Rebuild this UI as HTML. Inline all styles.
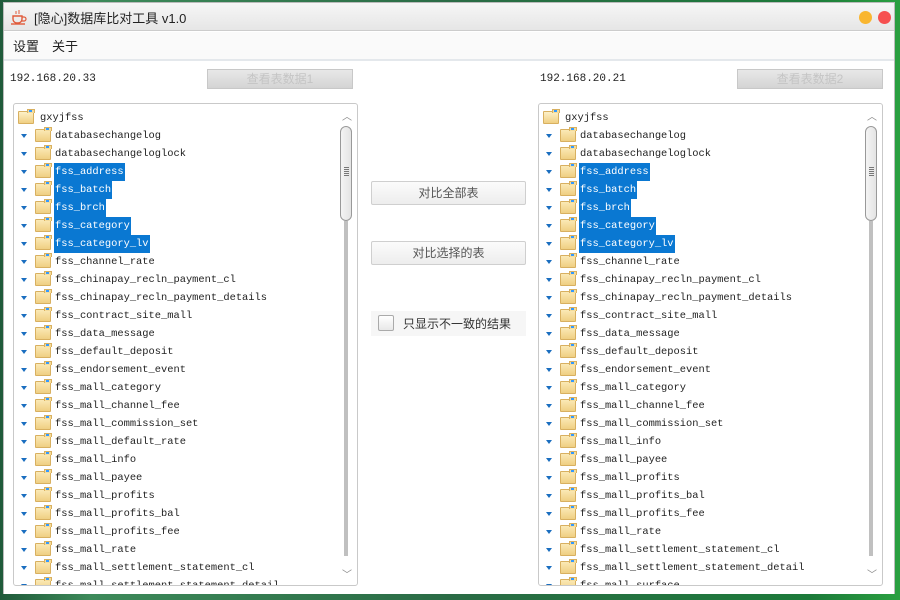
<!DOCTYPE html>
<html><head><meta charset="utf-8"><style>
*{margin:0;padding:0;box-sizing:border-box}
body{width:900px;height:600px;overflow:hidden;position:relative;background:linear-gradient(90deg,#1f5a3a 0%,#3d8a5a 10%,#2a6b45 50%,#1c7a3a 90%,#2aa040 100%);font-family:"Liberation Sans","Noto Sans CJK SC",sans-serif}
.win{position:absolute;left:3px;top:2px;width:892px;height:592px;background:#fff;border:1px solid #bbb}
.title{position:absolute;left:0;top:0;width:100%;height:28px;background:linear-gradient(#f6f6f6,#e6e6e6);border-bottom:1px solid #ccc}
.title span{position:absolute;left:30px;top:5px;font-size:13px;color:#222}
.dot{position:absolute;top:8px;width:13px;height:13px;border-radius:50%}
.menu{position:absolute;left:0;top:29px;width:100%;height:29px;background:#fafafa;border-bottom:2px solid #e4e8ec;font-size:13px;color:#222}
.menu span{position:absolute;top:4px}
.content{position:absolute;left:0;top:59px;width:100%;height:532px;background:#fff}
.ip{position:absolute;font-family:"Liberation Mono",monospace;font-size:11px;color:#222}
.gbtn{position:absolute;width:146px;height:20px;border:1px solid #c8c8c8;background:linear-gradient(#e8e8e8,#d4d4d4);color:#c4c4c4;font-size:12px;text-align:center;line-height:18px}
.box{position:absolute;top:103px;width:345px;height:483px;border:1px solid #c9c9c9;border-radius:3px;background:#fff;overflow:hidden}
.row{position:absolute;height:18px;font-family:"Liberation Mono",monospace;font-size:10.4px;color:#222;white-space:nowrap}
.row .arr{position:absolute;left:7px;top:7px;width:0;height:0;border-left:3.5px solid transparent;border-right:3.5px solid transparent;border-top:4px solid #1a6ec0}
.row .fd{position:absolute;left:21px;top:2px;width:16px;height:13px;background:linear-gradient(#fbe9b6,#efcf83);border:1px solid #d8b060;border-radius:1px}
.row .fd:before{content:"";position:absolute;left:8px;top:-3px;width:6px;height:3px;background:#f5dc9a;border:1px solid #d8b060;border-bottom:none}
.row .fd:after{content:"";position:absolute;right:1px;top:-2px;width:3px;height:2px;background:#39f}
.row .t{position:absolute;left:40px;top:0;height:18px;line-height:18px;padding:0 1px}
.sel .t{background:#0a78d2;color:#fff}
.sb{position:absolute;top:0;width:16px;height:100%;background:#fff}
.thumb{position:absolute;left:2px;top:22px;width:12px;height:95px;border:1px solid #999;border-radius:6px;background:linear-gradient(90deg,#f4f4f4,#e4e4e4)}
.trk{position:absolute;left:6px;top:117px;width:4px;height:335px;background:#c0c0c0}
.chev{position:absolute;left:4px;font-size:10px;color:#888}
.btn{position:absolute;left:371px;width:155px;height:24px;border:1px solid #cfcfcf;border-radius:2px;background:linear-gradient(#fbfbfb,#ededed);font-size:12px;color:#555;text-align:center;line-height:22px}
</style></head><body>
<div class="win">
<div class="title">
<svg style="position:absolute;left:6px;top:6px" width="18" height="16" viewBox="0 0 18 16"><path d="M3 7h9v3a4 4 0 0 1-4 4H7a4 4 0 0 1-4-4z" fill="none" stroke="#e05a3a" stroke-width="1.4"/><path d="M12 8h2a2 2 0 0 1 0 4h-2" fill="none" stroke="#e05a3a" stroke-width="1.2"/><path d="M1 15h14" stroke="#e05a3a" stroke-width="1.4"/><path d="M6 2v3M9 1v4" stroke="#e05a3a" stroke-width="1"/></svg>
<span>[隐心]数据库比对工具 v1.0</span>
<div class="dot" style="left:855px;background:#f9b630"></div>
<div class="dot" style="left:874px;background:#f65050"></div>
</div>
<div class="menu"><span style="left:9px">设置</span><span style="left:48px">关于</span></div>
<div class="content"></div>
</div>
<div class="ip" style="left:10px;top:73px">192.168.20.33</div>
<div class="gbtn" style="left:207px;top:69px">查看表数据1</div>
<div class="ip" style="left:540px;top:73px">192.168.20.21</div>
<div class="gbtn" style="left:737px;top:69px">查看表数据2</div>
<div class="btn" style="left:371px;top:181px">对比全部表</div>
<div class="btn" style="left:371px;top:241px">对比选择的表</div>
<div style="position:absolute;left:371px;top:311px;width:155px;height:25px;background:#f6f6f6"></div>
<div style="position:absolute;left:378px;top:315px;width:16px;height:16px;border:1px solid #aaa;border-radius:2px;background:linear-gradient(#fff,#e8e8e8)"></div>
<div style="position:absolute;left:403px;top:315px;font-size:12px;color:#333">只显示不一致的结果</div>

<div class="box" id="L" style="left:13px"></div>
<div class="box" id="R" style="left:538px"></div>
<script>
function build(id,items){
 var b=document.getElementById(id),h='';
 h+='<div class="row" style="left:4px;top:5px"><div class="fd" style="left:0;background:linear-gradient(#fdf0c8,#f0cf83)"></div><div class="t" style="left:21px">gxyjfss</div></div>';
 items.forEach(function(it,i){
  var s=[2,3,4,5,6].indexOf(i)>=0;
  h+='<div class="row'+(s?' sel':'')+'" style="left:0;top:'+(23+i*18)+'px"><div class="arr"></div><div class="fd"></div><div class="t">'+it+'</div></div>';
 });
 h+='<div class="sb" style="left:324px"><div class="chev" style="top:4px">︿</div><div class="thumb"><div style="position:absolute;left:3px;top:40px;width:5px;height:10px;background:repeating-linear-gradient(#777 0 1px,transparent 1px 2px)"></div></div><div class="trk"></div><div class="chev" style="top:462px">﹀</div></div>';
 b.innerHTML=h;
}
var base=['databasechangelog','databasechangeloglock','fss_address','fss_batch','fss_brch','fss_category','fss_category_lv','fss_channel_rate','fss_chinapay_recln_payment_cl','fss_chinapay_recln_payment_details','fss_contract_site_mall','fss_data_message','fss_default_deposit','fss_endorsement_event','fss_mall_category','fss_mall_channel_fee','fss_mall_commission_set'];
build('L',base.concat(['fss_mall_default_rate','fss_mall_info','fss_mall_payee','fss_mall_profits','fss_mall_profits_bal','fss_mall_profits_fee','fss_mall_rate','fss_mall_settlement_statement_cl','fss_mall_settlement_statement_detail']));
build('R',base.concat(['fss_mall_info','fss_mall_payee','fss_mall_profits','fss_mall_profits_bal','fss_mall_profits_fee','fss_mall_rate','fss_mall_settlement_statement_cl','fss_mall_settlement_statement_detail','fss_mall_surface']));
</script>
</body></html>
